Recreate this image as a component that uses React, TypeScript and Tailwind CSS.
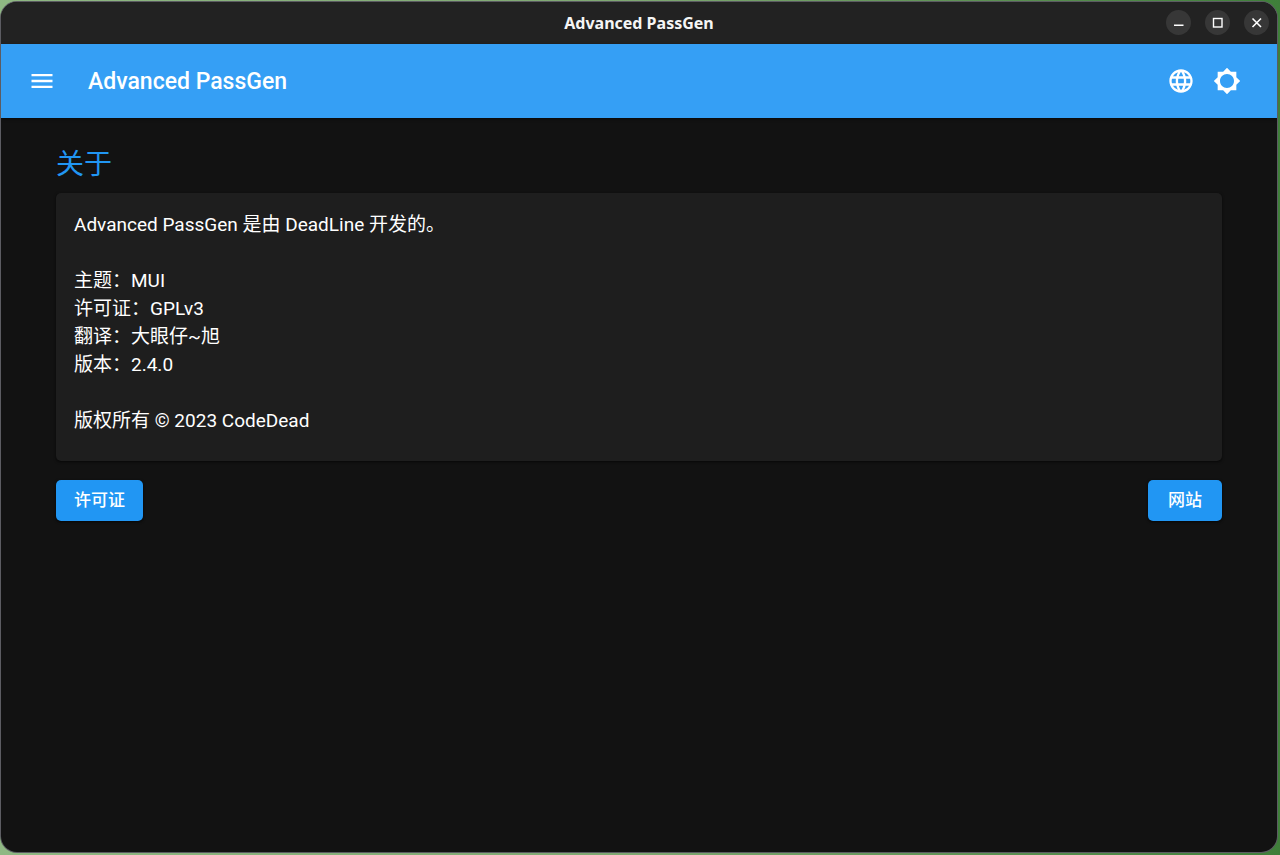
import type { ReactNode } from 'react';
import { MdBrightness5, MdLanguage, MdMenu } from 'react-icons/md';

function WindowButton({ label, children }: { label: string; children: ReactNode }) {
  return (
    <button
      type="button"
      aria-label={label}
      className="flex size-[25px] items-center justify-center rounded-full bg-[#373737] text-white"
    >
      <svg viewBox="0 0 25 25" className="size-[25px]" fill="none" stroke="currentColor">
        {children}
      </svg>
    </button>
  );
}

function TitleBar() {
  return (
    <header className="grid h-[42px] grid-cols-[1fr_auto_1fr] items-center bg-[#222222] pr-[8px]">
      <span />
      <h1 className="pl-[8px] font-['Noto_Sans',sans-serif] text-base font-bold text-[#f5f5f5]">Advanced PassGen</h1>
      <div className="flex items-center justify-end gap-[14px] pb-[2px]">
        <WindowButton label="Minimize">
          <path d="M8 15.2h9.5" strokeWidth="1.6" />
        </WindowButton>
        <WindowButton label="Maximize">
          <rect x="8.5" y="8.5" width="8.5" height="8.5" strokeWidth="1.4" />
        </WindowButton>
        <WindowButton label="Close">
          <path d="M8.5 8.5l8.5 8.5M17 8.5l-8.5 8.5" strokeWidth="1.6" />
        </WindowButton>
      </div>
    </header>
  );
}

function IconButton({ label, children }: { label: string; children: ReactNode }) {
  return (
    <button
      type="button"
      aria-label={label}
      className="flex size-[46px] items-center justify-center rounded-full text-[28px]"
    >
      {children}
    </button>
  );
}

function AppBar() {
  return (
    <nav className="flex h-[74px] items-center bg-[#359ff5] pr-[27px] pl-[18px] text-white shadow-sm shadow-black/40">
      <IconButton label="菜单">
        <MdMenu />
      </IconButton>
      <div className="ml-[23px] grow pt-[2px] text-[23px] font-medium">Advanced PassGen</div>
      <IconButton label="语言">
        <MdLanguage />
      </IconButton>
      <IconButton label="主题">
        <MdBrightness5 />
      </IconButton>
    </nav>
  );
}

function ContainedButton({ children }: { children: ReactNode }) {
  return (
    <button
      type="button"
      className="h-[41px] min-w-[74px] rounded-[5px] bg-[#2196f3] px-[18px] text-[17px] font-medium text-white shadow-sm shadow-black/60"
    >
      {children}
    </button>
  );
}

export default function App() {
  return (
    <div className="flex min-h-screen bg-linear-to-r from-[#8fb883] via-[#7fa872] to-[#3f7f3a] pt-[2px] pr-[3px] pb-[3px] pl-px font-[Roboto,'Noto_Sans_CJK_SC',sans-serif]">
      <div className="flex grow flex-col overflow-hidden rounded-[16px] bg-[#121212] shadow-[0_0_0_1px_#5c5c62]">
        <TitleBar />
        <AppBar />
        <main className="px-[55px] pt-[28px]">
          <h2 className="mb-[9px] text-[28px] leading-[38px] text-[#2196f3]">关于</h2>
          <section className="rounded-[5px] bg-[#1e1e1e] px-[18px] pt-[18px] pb-[26px] text-[19px] leading-[28px] text-white shadow-sm shadow-black/50">
            <p>Advanced PassGen 是由 DeadLine 开发的。</p>
            <br />
            <p>主题：MUI</p>
            <p>许可证：GPLv3</p>
            <p>翻译：大眼仔~旭</p>
            <p>版本：2.4.0</p>
            <br />
            <p>版权所有 © 2023 CodeDead</p>
          </section>
          <div className="mt-[19px] flex justify-between">
            <ContainedButton>许可证</ContainedButton>
            <ContainedButton>网站</ContainedButton>
          </div>
        </main>
      </div>
    </div>
  );
}
